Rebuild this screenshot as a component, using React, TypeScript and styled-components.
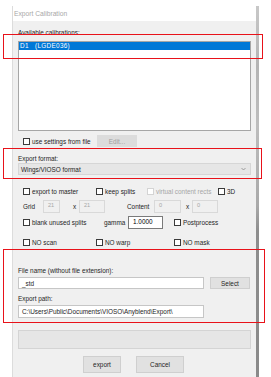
import React from "react";
import styled, { createGlobalStyle } from "styled-components";

const Global = createGlobalStyle`
  html, body { margin: 0; padding: 0; background: #ffffff; }
  body { font-family: "Liberation Sans", Arial, sans-serif; font-size: 6.4px; color: #1e1e1e; }
  * { box-sizing: border-box; }
`;

const Screen = styled.div`
  position: relative;
  width: 271px;
  height: 377px;
  overflow: hidden;
  padding: 6px 0 0 12px;
  display: flex;
  align-items: stretch;
`;

const Window = styled.div`
  width: 244px;
  border-left: 1px solid #dcdcdc;
  display: flex;
  flex-direction: column;
`;

const TitleBar = styled.div`
  height: 15px;
  padding-left: 1px;
  display: flex;
  align-items: center;
  color: #a8a8a8;
  font-size: 6.7px;
  background: #ffffff;
`;

const Client = styled.div`
  flex: 1;
  background: #f0f0f0;
  padding: 0 5px;
  display: flex;
  flex-direction: column;
`;

const RightStrip = styled.div`
  width: 3px;
  background: linear-gradient(
    #c8c8c8 0px,
    #b4b4b4 60px,
    #bdbdbd 120px,
    #a9a9a9 200px,
    #8e8e8e 225px,
    #8a8a8a 100%
  );
`;

const Label = styled.div<{ $mt: number }>`
  margin-top: ${(p) => p.$mt}px;
  height: 9px;
  line-height: 9px;
  white-space: nowrap;
`;

const ListBox = styled.div`
  margin-top: 4px;
  height: 90px;
  background: #ffffff;
  border: 1px solid #a6a6a6;
`;

const ListItem = styled.div<{ $selected?: boolean }>`
  height: 8px;
  line-height: 8px;
  padding-left: 1px;
  background: ${(p) => (p.$selected ? "#0078d7" : "transparent")};
  color: ${(p) => (p.$selected ? "#ffffff" : "#000")};
  white-space: pre;
  letter-spacing: 0.3px;
`;

const Row = styled.div<{ $mt: number; $h: number }>`
  margin-top: ${(p) => p.$mt}px;
  height: ${(p) => p.$h}px;
  display: flex;
  align-items: center;
  white-space: nowrap;
`;

const Cell = styled.div<{ $w?: number }>`
  ${(p) => (p.$w !== undefined ? `width: ${p.$w}px; flex: none;` : "flex: 1;")}
  display: flex;
  align-items: center;
  height: 100%;
`;

const Box = styled.span<{ $disabled?: boolean }>`
  width: 7px;
  height: 7px;
  flex: none;
  background: #ffffff;
  border: 1px solid ${(p) => (p.$disabled ? "#d4d4d4" : "#3a3a3a")};
  margin-right: 2px;
`;

const CheckText = styled.span<{ $disabled?: boolean }>`
  color: ${(p) => (p.$disabled ? "#a6a6a6" : "#1e1e1e")};
`;

const Check: React.FC<{ label: string; disabled?: boolean }> = ({ label, disabled }) => (
  <>
    <Box $disabled={disabled} />
    <CheckText $disabled={disabled}>{label}</CheckText>
  </>
);

const Button = styled.div<{ $w: number; $h: number; $disabled?: boolean }>`
  width: ${(p) => p.$w}px;
  height: ${(p) => p.$h}px;
  flex: none;
  display: flex;
  align-items: center;
  justify-content: center;
  background: ${(p) => (p.$disabled ? "#dcdcdc" : "#e1e1e1")};
  border: 1px solid ${(p) => (p.$disabled ? "#dcdcdc" : "#cfcfcf")};
  color: ${(p) => (p.$disabled ? "#a0a0a0" : "#1e1e1e")};
`;

const Combo = styled.div`
  height: 12px;
  background: #e6e6e6;
  border: 1px solid #d6d6d6;
  display: flex;
  align-items: center;
  justify-content: space-between;
  padding: 0 4px 0 2px;
`;

const Chevron = styled.svg`
  width: 5px;
  height: 4px;
`;

const NumBox = styled.div<{ $w: number; $white?: boolean }>`
  width: ${(p) => p.$w}px;
  height: 13px;
  flex: none;
  background: ${(p) => (p.$white ? "#ffffff" : "#f0f0f0")};
  border: 1px solid ${(p) => (p.$white ? "#7a7a7a" : "#d9d9d9")};
  color: ${(p) => (p.$white ? "#000" : "#a6a6a6")};
  padding: 1px 0 0 4px;
  line-height: 7px;
  font-size: ${(p) => (p.$white ? "6.4px" : "5.6px")};
`;

const Text = styled.span<{ $w?: number }>`
  ${(p) => (p.$w !== undefined ? `width: ${p.$w}px; flex: none;` : "")}
`;

const TextField = styled.div<{ $h: number }>`
  width: 186px;
  height: ${(p) => p.$h}px;
  flex: none;
  background: #ffffff;
  border: 1px solid #c6c6c6;
  display: flex;
  align-items: center;
  padding-left: 3px;
  white-space: nowrap;
`;

const Progress = styled.div`
  margin-top: 12px;
  height: 19px;
  background: #e6e6e6;
  border: 1px solid #d4d4d4;
`;

const ButtonBar = styled.div`
  margin-top: 7px;
  display: flex;
  gap: 15px;
  padding-left: 65px;
`;

const Highlight = styled.div<{ $x: number; $y: number; $w: number; $h: number }>`
  position: absolute;
  left: ${(p) => p.$x}px;
  top: ${(p) => p.$y}px;
  width: ${(p) => p.$w}px;
  height: ${(p) => p.$h}px;
  border: 1px solid #e8121a;
  pointer-events: none;
`;

export default function App() {
  return (
    <>
      <Global />
      <Screen>
        <Window>
          <TitleBar>Export Calibration</TitleBar>
          <Client>
            <Label $mt={7}>Available calibrations:</Label>
            <ListBox>
              <ListItem $selected>{"D1   (LGDE036)"}</ListItem>
            </ListBox>

            <Row $mt={4} $h={12} style={{ paddingLeft: 5 }}>
              <Cell $w={74}>
                <Check label="use settings from file" />
              </Cell>
              <Button $w={40} $h={12} $disabled>
                Edit...
              </Button>
            </Row>

            <Label $mt={7}>Export format:</Label>
            <Combo>
              <span>Wings/VIOSO format</span>
              <Chevron viewBox="0 0 5 4">
                <path d="M0.5 1 L2.5 3 L4.5 1" fill="none" stroke="#8a8a8a" strokeWidth="0.8" />
              </Chevron>
            </Combo>

            <Row $mt={11} $h={10} style={{ paddingLeft: 5 }}>
              <Cell $w={73}>
                <Check label="export to master" />
              </Cell>
              <Cell $w={51}>
                <Check label="keep splits" />
              </Cell>
              <Cell $w={71}>
                <Check label="virtual content rects" disabled />
              </Cell>
              <Cell>
                <Check label="3D" />
              </Cell>
            </Row>

            <Row $mt={4} $h={13} style={{ paddingLeft: 5 }}>
              <Text $w={20}>Grid</Text>
              <NumBox $w={17}>21</NumBox>
              <Text $w={19} style={{ paddingLeft: 13 }}>x</Text>
              <NumBox $w={26}>21</NumBox>
              <Text $w={49} style={{ paddingLeft: 22 }}>Content</Text>
              <NumBox $w={27}>0</NumBox>
              <Text $w={11} style={{ paddingLeft: 5 }}>x</Text>
              <NumBox $w={26}>0</NumBox>
            </Row>

            <Row $mt={3} $h={13} style={{ paddingLeft: 5 }}>
              <Cell $w={81}>
                <Check label="blank unused splits" />
              </Cell>
              <Text $w={24}>gamma</Text>
              <NumBox $w={35} $white>
                1.0000
              </NumBox>
              <Cell $w={11} />
              <Cell>
                <Check label="Postprocess" />
              </Cell>
            </Row>

            <Row $mt={8} $h={10} style={{ paddingLeft: 5 }}>
              <Cell $w={73}>
                <Check label="NO scan" />
              </Cell>
              <Cell $w={78}>
                <Check label="NO warp" />
              </Cell>
              <Cell>
                <Check label="NO mask" />
              </Cell>
            </Row>

            <Label $mt={19}>File name (without file extension):</Label>
            <Row $mt={2} $h={12}>
              <TextField $h={12}>_std</TextField>
              <Cell $w={6} />
              <Button $w={40} $h={12}>
                Select
              </Button>
            </Row>

            <Label $mt={5}>Export path:</Label>
            <Row $mt={2} $h={13}>
              <TextField $h={13}>C:\Users\Public\Documents\VIOSO\Anyblend\Export\</TextField>
            </Row>

            <Progress />

            <ButtonBar>
              <Button $w={38} $h={17}>
                export
              </Button>
              <Button $w={48} $h={17}>
                Cancel
              </Button>
            </ButtonBar>
          </Client>
        </Window>
        <RightStrip />
        <Highlight $x={3} $y={34} $w={260} $h={25} />
        <Highlight $x={3} $y={148} $w={259} $h={31} />
        <Highlight $x={3} $y={249} $w={262} $h={74} />
      </Screen>
    </>
  );
}
